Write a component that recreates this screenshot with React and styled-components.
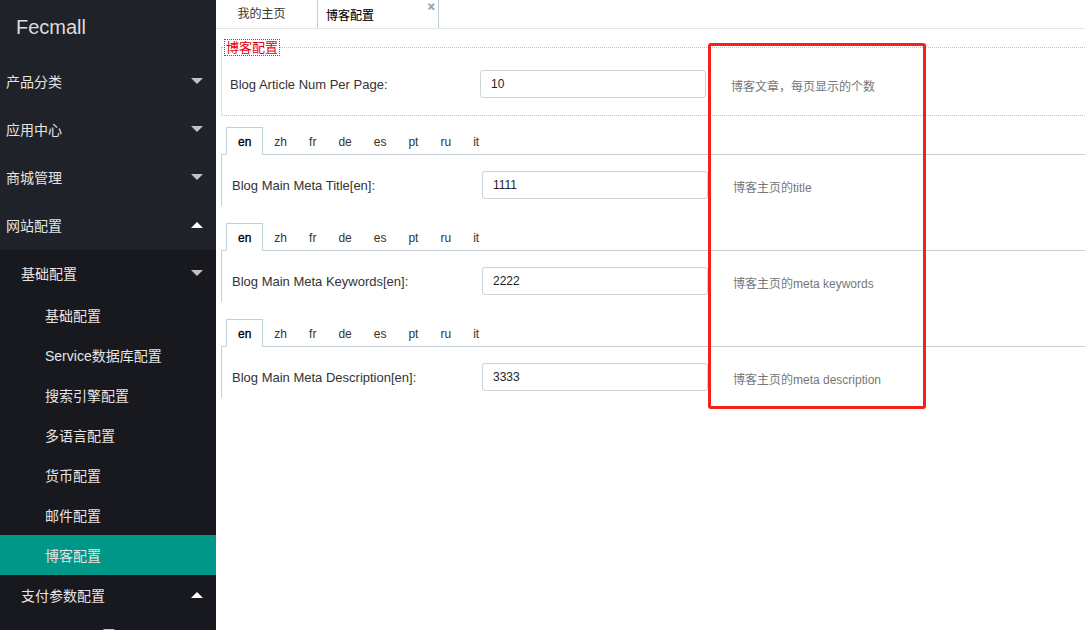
import React from "react";
import styled, { createGlobalStyle } from "styled-components";

const Global = createGlobalStyle`
  html, body { margin: 0; padding: 0; background: #fff; }
  body { font-family: "Liberation Sans", Arial, "Noto Sans CJK SC", sans-serif; }
  * { box-sizing: border-box; }
`;

const Page = styled.div`
  position: relative;
  display: flex;
  width: 100%;
  height: 630px;
  overflow: hidden;
`;

const Sidebar = styled.aside`
  width: 216px;
  flex: none;
  background: #20222a;
  color: #e2e2e2;
  font-size: 14px;
  font-family: "Liberation Sans", Arial, "Noto Sans CJK SC", sans-serif;
`;

const Logo = styled.div`
  height: 58px;
  padding-left: 16px;
  display: flex;
  align-items: center;
  font-size: 20px;
  color: #dcdcdc;
  padding-bottom: 4px;
`;

const Caret = styled.span`
  width: 0;
  height: 0;
  border-left: 6px solid transparent;
  border-right: 6px solid transparent;
  ${(p) =>
    p.$up
      ? `border-bottom: 6px solid #fff;`
      : `border-top: 6px solid #c2c2c2;`}
`;

const NavItem = styled.div`
  height: ${(p) => p.$h}px;
  display: flex;
  align-items: center;
  justify-content: space-between;
  padding-left: ${(p) => p.$indent}px;
  padding-right: 13px;
  padding-bottom: ${(p) => p.$pb || 0}px;
  background: ${(p) => (p.$active ? "#009688" : "transparent")};
  color: #e4e4e4;
`;

const SubMenu = styled.div`
  background: #18181f;
`;

const Main = styled.main`
  flex: 1;
  min-width: 0;
  overflow: hidden;
`;

const TabBar = styled.div`
  height: 29px;
  display: flex;
  border-bottom: 1px solid #e6e6e6;
  font-size: 12px;
  font-family: "Liberation Sans", Arial, "Noto Sans CJK SC", sans-serif;
`;

const PageTab = styled.div`
  position: relative;
  width: ${(p) => p.$w}px;
  height: 28px;
  border-right: 1px solid #bcd0d8;
  display: flex;
  align-items: ${(p) => (p.$current ? "flex-end" : "center")};
  justify-content: ${(p) => (p.$current ? "flex-start" : "center")};
  padding: ${(p) => (p.$current ? "0 0 5px 8px" : "0 10px 3px 0")};
  color: ${(p) => (p.$current ? "#000" : "#333")};
  -webkit-text-stroke: ${(p) => (p.$current ? "0.1px #000" : "0")};
`;

const Close = styled.span`
  position: absolute;
  top: 0;
  right: 3px;
  font-size: 13px;
  line-height: 13px;
  font-weight: 700;
  color: #9fb8c0;
`;

const Content = styled.div`
  width: calc(100% + 40px);
  padding: 11px 0 0 5px;
`;

const FieldSet = styled.fieldset`
  margin: 0;
  border: 1px dotted #b3cbd3;
  padding: 0 0 17px 3px;
`;

const Legend = styled.legend`
  padding: 0 1px;
  font-size: 13px;
  line-height: 15px;
  color: #e0000f;
  outline: 1px dotted #00897b;
  font-family: "Liberation Sans", Arial, "Noto Sans CJK SC", sans-serif;
`;

const Row = styled.div`
  display: flex;
  align-items: center;
  padding-left: ${(p) => p.$pl}px;
  margin-top: ${(p) => p.$mt}px;
`;

const Label = styled.label`
  width: 250px;
  flex: none;
  font-size: 13px;
  color: #333;
`;

const Input = styled.div`
  width: 226px;
  height: 28px;
  flex: none;
  border: 1px solid #ccd3da;
  border-radius: 3px;
  display: flex;
  align-items: center;
  padding-left: 10px;
  font-size: 12px;
  color: #222;
  background: #fff;
`;

const Hint = styled.span`
  margin-left: 25px;
  font-size: 12px;
  color: #777;
  padding-top: 3px;
  font-family: "Liberation Sans", Arial, "Noto Sans CJK SC", sans-serif;
`;

const LangBlock = styled.div`
  margin-top: ${(p) => p.$mt}px;
`;

const LangTabs = styled.div`
  display: flex;
  padding-left: 5px;
  height: 28px;
  margin-bottom: -1px;
  position: relative;
  z-index: 1;
  font-size: 12px;
`;

const LangTab = styled.div`
  padding: 0 ${(p) => (p.$active ? 11 : 10)}px;
  height: 28px;
  display: flex;
  align-items: center;
  padding-top: 2px;
  border: 1px solid ${(p) => (p.$active ? "#c0d2d8" : "transparent")};
  border-bottom: 1px solid ${(p) => (p.$active ? "#fff" : "transparent")};
  background: ${(p) => (p.$active ? "#fff" : "transparent")};
  color: ${(p) => (p.$active ? "#000" : "#333")};
  -webkit-text-stroke: ${(p) => (p.$active ? "0.3px #000" : "0")};
`;

const LangPanel = styled.div`
  height: 52px;
  border-top: 1px solid #c4d2d8;
  border-left: 1px solid #c4d2d8;
  padding-top: 16px;
`;

const Annotation = styled.div`
  position: absolute;
  left: 708px;
  top: 43px;
  width: 218px;
  height: 366px;
  border: 3px solid #f5201a;
  border-radius: 3px;
  pointer-events: none;
`;

const langs = ["en", "zh", "fr", "de", "es", "pt", "ru", "it"];

const langFields = [
  { label: "Blog Main Meta Title[en]:", value: "1111", hint: "博客主页的title" },
  { label: "Blog Main Meta Keywords[en]:", value: "2222", hint: "博客主页的meta keywords" },
  { label: "Blog Main Meta Description[en]:", value: "3333", hint: "博客主页的meta description" },
];

const subItems = ["基础配置", "Service数据库配置", "搜索引擎配置", "多语言配置", "货币配置", "邮件配置", "博客配置"];

export default function App() {
  return (
    <>
      <Global />
      <Page>
        <Sidebar>
          <Logo>Fecmall</Logo>
          {["产品分类", "应用中心", "商城管理"].map((t) => (
            <NavItem key={t} $h={48} $indent={6} $pb={2}>
              {t}
              <Caret />
            </NavItem>
          ))}
          <NavItem $h={48} $indent={6} $pb={2}>
            网站配置
            <Caret $up />
          </NavItem>
          <SubMenu>
            <NavItem $h={45} $indent={21}>
              基础配置
              <Caret />
            </NavItem>
            {subItems.map((t) => (
              <NavItem key={t} $h={40} $indent={45} $active={t === "博客配置"}>
                {t}
              </NavItem>
            ))}
            <NavItem $h={40} $indent={21}>
              支付参数配置
              <Caret $up />
            </NavItem>
            <NavItem $h={40} $indent={45}>
              Paypal配置
            </NavItem>
          </SubMenu>
        </Sidebar>
        <Main>
          <TabBar>
            <PageTab $w={102}>我的主页</PageTab>
            <PageTab $w={121} $current>
              博客配置
              <Close>×</Close>
            </PageTab>
          </TabBar>
          <Content>
            <FieldSet>
              <Legend>博客配置</Legend>
              <Row $pl={5} $mt={15}>
                <Label>Blog Article Num Per Page:</Label>
                <Input>10</Input>
                <Hint>博客文章，每页显示的个数</Hint>
              </Row>
            </FieldSet>
            {langFields.map((f, i) => (
              <LangBlock key={f.label} $mt={i === 0 ? 11 : 17}>
                <LangTabs>
                  {langs.map((l) => (
                    <LangTab key={l} $active={l === "en"}>
                      {l}
                    </LangTab>
                  ))}
                </LangTabs>
                <LangPanel>
                  <Row $pl={10} $mt={0}>
                    <Label>{f.label}</Label>
                    <Input>{f.value}</Input>
                    <Hint>{f.hint}</Hint>
                  </Row>
                </LangPanel>
              </LangBlock>
            ))}
          </Content>
        </Main>
        <Annotation />
      </Page>
    </>
  );
}
